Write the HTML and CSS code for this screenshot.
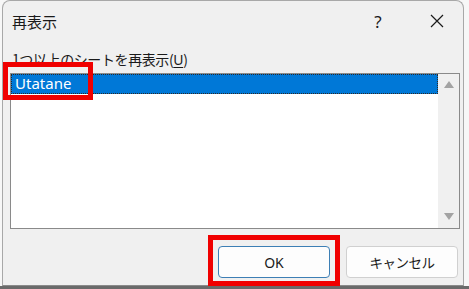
FILE: index.html
```html
<!DOCTYPE html>
<html lang="ja">
<head>
<meta charset="utf-8">
<title>再表示</title>
<link rel="stylesheet" href="styles.css">
</head>
<body>
<div class="desktop">
  <div class="window">
    <div class="titlebar">
      <div class="title">再表示</div>
      <div class="tb-btn help">?</div>
      <div class="tb-btn close">
        <svg width="14" height="14" viewBox="0 0 14 14"><path d="M1 1 L13 13 M13 1 L1 13" stroke="#1a1a1a" stroke-width="1.2" fill="none"/></svg>
      </div>
    </div>
    <div class="label">1つ以上のシートを再表示(<u>U</u>)</div>
    <div class="listbox">
      <div class="items">
        <div class="item selected">Utatane</div>
      </div>
      <div class="scrollbar">
        <svg class="arrow" width="12" height="10" viewBox="0 0 12 10"><path d="M1 9 L6 2 L11 9 Z" fill="#a3a3a3"/></svg>
        <svg class="arrow" width="12" height="10" viewBox="0 0 12 10"><path d="M1 1 L6 8 L11 1 Z" fill="#a3a3a3"/></svg>
      </div>
    </div>
    <div class="buttons">
      <div class="btn default">OK</div>
      <div class="btn cancel">キャンセル</div>
    </div>
  </div>
  <div class="mark mark-item"></div>
  <div class="mark mark-ok"></div>
</div>
</body>
</html>
```
FILE: styles.css
```css
html, body {
  margin: 0;
  padding: 0;
}
body {
  width: 469px;
  height: 289px;
  overflow: hidden;
  background: #f7f7f7;
  font-family: "Noto Sans", "Noto Sans CJK JP", sans-serif;
  color: #1a1a1a;
}
.desktop {
  position: relative;
  width: 469px;
  height: 289px;
  background: linear-gradient(#f7f7f7 0, #f7f7f7 286px, #6a6a6a 286px);
}
.window {
  margin-left: 2px;
  width: 462px;
  height: 286px;
  box-sizing: border-box;
  border: 1px solid #a8a8a8;
  border-bottom-color: #8a8a8a;
  border-radius: 8px 8px 0 0;
  background: #f0f0f0;
  display: flex;
  flex-direction: column;
}
.titlebar {
  height: 40px;
  display: flex;
  align-items: center;
  flex-shrink: 0;
}
.title {
  flex: 1;
  padding-left: 9px;
  font-size: 15px;
  font-family: "Noto Sans CJK JP", sans-serif;
  padding-top: 1px;
}
.tb-btn {
  width: 46px;
  height: 40px;
  display: flex;
  align-items: center;
  justify-content: center;
}
.help {
  font-size: 17px;
  margin-right: 13px;
}
.close {
  margin-right: 3px;
}
.label {
  margin-top: 9px;
  padding-left: 9px;
  height: 18px;
  line-height: 18px;
  font-size: 14px;
  font-family: "Noto Sans CJK JP", sans-serif;
  letter-spacing: -0.4px;
}
.label u {
  font-family: "Noto Sans", sans-serif;
  text-underline-offset: 2px;
}
.listbox {
  margin-top: 5px;
  margin-left: 7px;
  width: 450px;
  height: 156px;
  box-sizing: border-box;
  border: 1px solid #8a8a8a;
  background: #ffffff;
  display: flex;
}
.items {
  flex: 1;
}
.item {
  height: 20px;
  line-height: 19px;
  box-sizing: border-box;
  padding-left: 4px;
  font-size: 15px;
}
.selected {
  background: #0078d7;
  color: #ffffff;
  outline: 1px dotted #2a2a2a;
  outline-offset: -1px;
}
.scrollbar {
  width: 21px;
  background: #f0f0f0;
  display: flex;
  flex-direction: column;
  justify-content: space-between;
  align-items: center;
  padding: 5px 0 6px;
  box-sizing: border-box;
}
.buttons {
  margin-top: 17px;
  display: flex;
  justify-content: flex-end;
  gap: 16px;
  padding-right: 5px;
}
.btn {
  width: 112px;
  height: 32px;
  box-sizing: border-box;
  border: 1px solid #d0d0d0;
  border-radius: 4px;
  background: #fdfdfd;
  display: flex;
  align-items: center;
  justify-content: center;
  font-size: 14px;
  font-family: "Noto Sans", "Noto Sans CJK JP", sans-serif;
}
.btn.cancel {
  font-size: 13.5px;
  letter-spacing: -0.5px;
}
.btn.default {
  border-color: #3d7fb5;
}
.mark {
  position: absolute;
  border: 5px solid #f00000;
  box-sizing: border-box;
}
.mark-item {
  left: 3px;
  top: 62px;
  width: 90px;
  height: 38px;
}
.mark-ok {
  left: 208px;
  top: 235px;
  width: 132px;
  height: 51px;
}
```
